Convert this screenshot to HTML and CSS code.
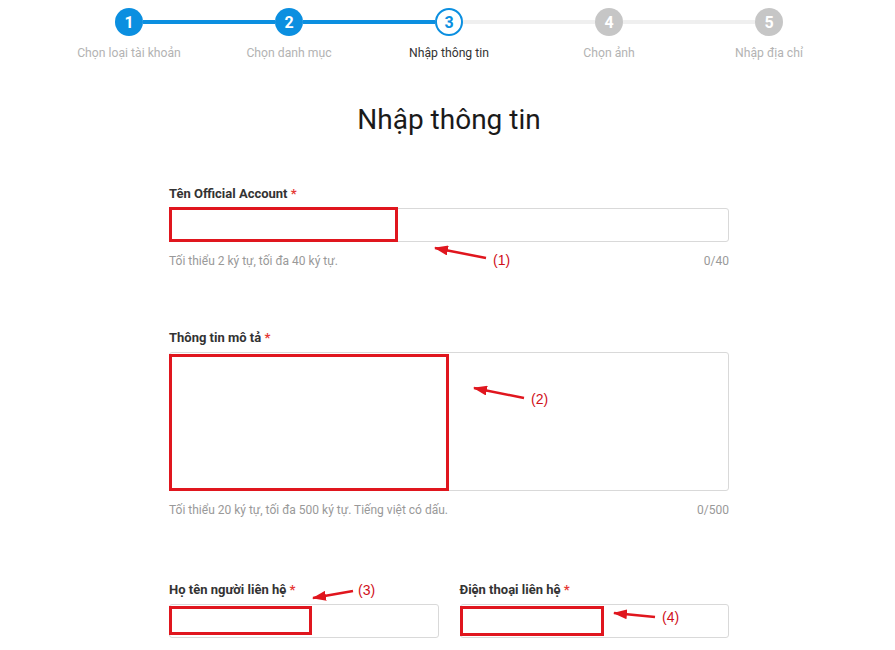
FILE: index.html
```html
<!DOCTYPE html>
<html lang="vi">
<head>
<meta charset="utf-8">
<title>Nhập thông tin</title>
<link rel="stylesheet" href="styles.css">
</head>
<body>
<div class="page">
  <div class="stepper">
    <div class="track">
      <span class="circle done">1</span>
      <span class="bar on"></span>
      <span class="circle done">2</span>
      <span class="bar on"></span>
      <span class="circle current">3</span>
      <span class="bar"></span>
      <span class="circle todo">4</span>
      <span class="bar"></span>
      <span class="circle todo">5</span>
    </div>
    <div class="labels">
      <span class="step-label">Chọn loại tài khoản</span>
      <span class="step-label">Chọn danh mục</span>
      <span class="step-label active">Nhập thông tin</span>
      <span class="step-label">Chọn ảnh</span>
      <span class="step-label">Nhập địa chỉ</span>
    </div>
  </div>

  <h1 class="title">Nhập thông tin</h1>

  <form class="form">
    <div class="field">
      <label class="field-label">Tên Official Account <span class="req">*</span></label>
      <div class="input"></div>
      <div class="hint"><span>Tối thiểu 2 ký tự, tối đa 40 ký tự.</span><span>0/40</span></div>
    </div>

    <div class="field field-2">
      <label class="field-label">Thông tin mô tả <span class="req">*</span></label>
      <div class="input textarea"></div>
      <div class="hint"><span>Tối thiểu 20 ký tự, tối đa 500 ký tự. Tiếng việt có dấu.</span><span>0/500</span></div>
    </div>

    <div class="row">
      <div class="field">
        <label class="field-label">Họ tên người liên hệ <span class="req">*</span></label>
        <div class="input"></div>
      </div>
      <div class="field">
        <label class="field-label">Điện thoại liên hệ <span class="req">*</span></label>
        <div class="input"></div>
      </div>
    </div>
  </form>

  <svg class="annot" width="895" height="650" viewBox="0 0 895 650" xmlns="http://www.w3.org/2000/svg">
    <defs>
      <marker id="head" markerUnits="userSpaceOnUse" markerWidth="14" markerHeight="10" refX="13" refY="5" orient="auto">
        <path d="M0,0 L14,5 L0,10 z" fill="#e0161e"/>
      </marker>
    </defs>
    <g fill="none" stroke="#e0161e" stroke-width="3">
      <rect x="170.5" y="208.5" width="226" height="32"/>
      <rect x="170.5" y="355.5" width="277" height="134"/>
      <rect x="170.5" y="607.5" width="140" height="26"/>
      <rect x="461.5" y="607.5" width="141" height="27"/>
    </g>
    <g stroke="#e0161e" stroke-width="2.5" marker-end="url(#head)">
      <line x1="486" y1="258" x2="435" y2="248"/>
      <line x1="524" y1="398" x2="474" y2="388"/>
      <line x1="353" y1="591" x2="313" y2="598"/>
      <line x1="655" y1="617" x2="614" y2="613"/>
    </g>
    <g class="num" fill="#d0101a">
      <text x="493" y="265">(1)</text>
      <text x="531" y="404">(2)</text>
      <text x="358" y="595">(3)</text>
      <text x="662" y="622">(4)</text>
    </g>
  </svg>
</div>
</body>
</html>
```

FILE: styles.css
```css
* { box-sizing: border-box; }

html, body {
  margin: 0;
  padding: 0;
  background: #ffffff;
}

body {
  font-family: Roboto, "Liberation Sans", Arial, sans-serif;
  color: #333333;
}

.page {
  position: relative;
  width: 895px;
  height: 650px;
  padding-left: 3px;
  overflow: hidden;
}

/* Stepper */
.stepper {
  width: 800px;
  margin: 0 auto;
  padding-top: 8px;
}

.track {
  display: flex;
  align-items: center;
  padding-left: 66px;
  height: 28px;
}

.circle {
  width: 28px;
  height: 28px;
  border-radius: 50%;
  display: flex;
  align-items: center;
  justify-content: center;
  font-size: 16px;
  font-weight: 700;
  color: #ffffff;
  flex: none;
}

.circle.done { background: #0b8fe0; }

.circle.current {
  background: #ffffff;
  border: 2px solid #0b8fe0;
  color: #0b8fe0;
}

.circle.todo { background: #c6c6c6; }

.bar {
  width: 132px;
  height: 4px;
  background: #efefef;
  flex: none;
}

.bar.on { background: #0b8fe0; }

.labels {
  display: flex;
  margin-top: 9px;
}

.step-label {
  width: 160px;
  text-align: center;
  font-size: 12.2px;
  line-height: 16px;
  color: #b3b3b3;
}

.step-label.active { color: #333333; }

/* Title */
.title {
  margin: 41px 0 0;
  text-align: center;
  font-size: 28px;
  line-height: 36px;
  font-weight: 400;
  color: #1a1a1a;
}

/* Form */
.form {
  width: 560px;
  margin: 48px auto 0;
}

.field-label {
  display: block;
  font-size: 13px;
  line-height: 16px;
  font-weight: 700;
  color: #333333;
  margin-bottom: 6px;
}

.req { color: #e53935; }

.input {
  height: 34px;
  border: 1px solid #d9d9d9;
  border-radius: 3px;
  background: #ffffff;
}

.input.textarea { height: 139px; }

.hint {
  display: flex;
  justify-content: space-between;
  margin-top: 11px;
  font-size: 12px;
  line-height: 16px;
  color: #999999;
}

.field-2 { margin-top: 61px; }

.row {
  display: grid;
  grid-template-columns: 1fr 1fr;
  column-gap: 21px;
  margin-top: 64px;
}

/* Annotation overlay */
.annot {
  position: absolute;
  top: 0;
  left: 0;
  pointer-events: none;
}

.num text {
  font-family: "Liberation Sans", Arial, sans-serif;
  font-size: 14px;
}
```
